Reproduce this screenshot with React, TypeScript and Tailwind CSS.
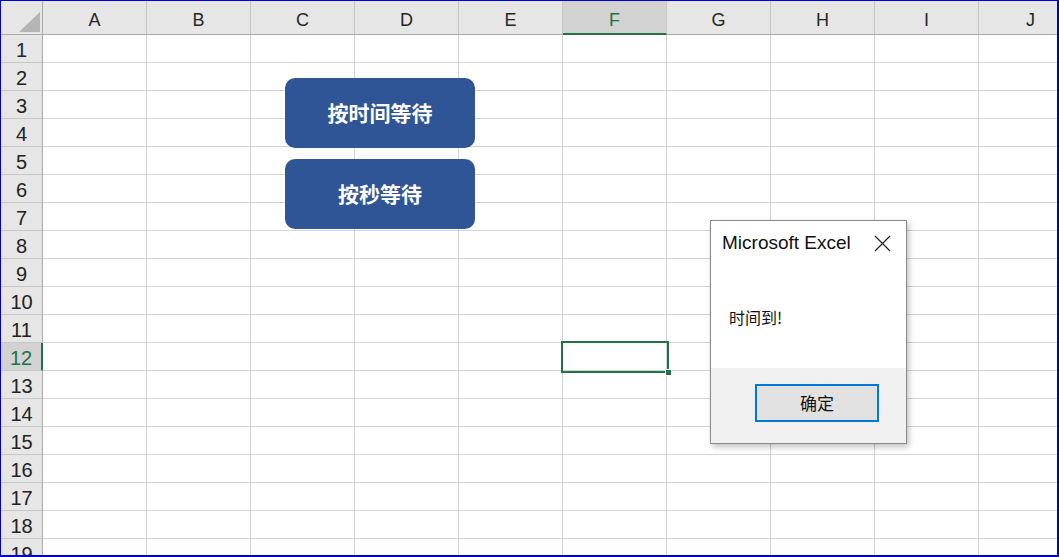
import React from 'react';

const cols = ['A', 'B', 'C', 'D', 'E', 'F', 'G', 'H', 'I', 'J'];
const rows = Array.from({ length: 19 }, (_, i) => i + 1);

const latin = { fontFamily: '"Liberation Sans", Arial, sans-serif' };
const cjk = { fontFamily: '"Noto Sans CJK SC", "Liberation Sans", sans-serif' };

function HeaderRow() {
  return (
    <div className="flex h-[34px] shrink-0">
      <div className="w-[42px] shrink-0 bg-[#e6e6e6] border-r border-b border-[#ababab] relative">
        <svg className="absolute left-[18px] top-[11px]" width="21" height="20" viewBox="0 0 21 20">
          <polygon points="21,0 21,20 0,20" fill="#b4b4b4" />
        </svg>
      </div>
      {cols.map((c) => {
        const active = c === 'F';
        return (
          <div
            key={c}
            className={
              'w-[104px] shrink-0 border-r border-[#c6c6c6] flex items-center justify-center pt-[6px] text-[18px] ' +
              (active
                ? 'bg-[#d2d2d2] text-[#217346] border-b-2 border-b-[#217346]'
                : 'bg-[#e6e6e6] text-[#262626] border-b border-b-[#ababab]')
            }
            style={latin}
          >
            {c}
          </div>
        );
      })}
    </div>
  );
}

function GridRow({ n }: { n: number }) {
  const active = n === 12;
  return (
    <div className="flex h-[28px] shrink-0">
      <div
        className={
          'w-[42px] shrink-0 border-b border-[#c6c6c6] flex items-center justify-center pt-[3px] text-[20px] ' +
          (active
            ? 'bg-[#d2d2d2] text-[#217346] border-r-2 border-r-[#217346]'
            : 'bg-[#e6e6e6] text-[#222] border-r border-r-[#ababab]')
        }
        style={latin}
      >
        {n}
      </div>
      {cols.map((c) => (
        <div key={c} className="w-[104px] shrink-0 border-r border-b border-[#d4d4d4] bg-white" />
      ))}
    </div>
  );
}

export default function App() {
  return (
    <div className="w-[1059px] h-[557px] border-t border-l border-r-2 border-b-2 border-[#0000cc] overflow-hidden bg-white">
      <div className="relative w-full h-full overflow-hidden flex flex-col">
        <HeaderRow />
        {rows.map((n) => (
          <GridRow key={n} n={n} />
        ))}

        {/* shapes */}
        <div
          className="absolute left-[284px] top-[77px] w-[190px] h-[70px] rounded-[10px] bg-[#2f5597] flex items-center justify-center text-white font-bold text-[21px]"
          style={cjk}
        >
          按时间等待
        </div>
        <div
          className="absolute left-[284px] top-[158px] w-[190px] h-[70px] rounded-[10px] bg-[#2f5597] flex items-center justify-center text-white font-bold text-[21px]"
          style={cjk}
        >
          按秒等待
        </div>

        {/* active cell F12 */}
        <div className="absolute left-[560px] top-[340px] w-[108px] h-[32px] border-2 border-[#217346]">
          <div className="absolute right-[-5px] bottom-[-5px] w-[7px] h-[7px] bg-[#217346] border border-white" />
        </div>

        {/* message box */}
        <div className="absolute left-[709px] top-[219px] w-[197px] h-[224px] border border-[#8a8a8a] bg-white flex flex-col shadow-[2px_3px_6px_rgba(0,0,0,0.25)]">
          <div className="h-[147px] shrink-0 flex flex-col">
            <div className="h-[44px] pl-[11px] pr-[15px] flex items-center justify-between">
              <span className="text-[19px] text-[#111]" style={latin}>
                Microsoft Excel
              </span>
              <svg width="17" height="17" viewBox="0 0 17 17">
                <path d="M1 1 L16 16 M16 1 L1 16" stroke="#222" strokeWidth="1.2" fill="none" />
              </svg>
            </div>
            <div className="mt-[42px] pl-[18px] h-[20px] flex items-center text-[16px] text-[#111]" style={cjk}>
              时间到!
            </div>
          </div>
          <div className="flex-1 bg-[#f0f0f0] pt-[16px] pl-[44px]">
            <div
              className="w-[124px] h-[38px] border-2 border-[#0078d7] bg-[#e1e1e1] flex items-center justify-center text-[17px] text-[#111]"
              style={cjk}
            >
              确定
            </div>
          </div>
        </div>
      </div>
    </div>
  );
}
